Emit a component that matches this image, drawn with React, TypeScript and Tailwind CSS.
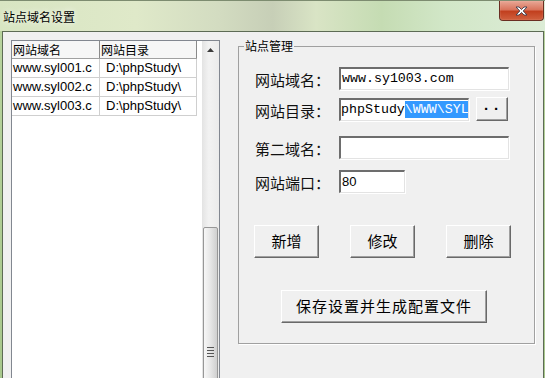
import React from 'react';

const rows = [
  ['www.syl001.c', 'D:\\phpStudy\\'],
  ['www.syl002.c', 'D:\\phpStudy\\'],
  ['www.syl003.c', 'D:\\phpStudy\\'],
];

const inputCls =
  'h-[23px] bg-white border-t-2 border-l-2 border-b border-r border-t-[#6d6d6d] border-l-[#6d6d6d] border-b-[#e3e3e3] border-r-[#e3e3e3] shadow-[1px_1px_0_#ffffff] flex items-center overflow-hidden whitespace-nowrap';

const btnCls =
  'bg-[#f0f0f0] border border-t-white border-l-white border-r-[#696969] border-b-[#696969] shadow-[inset_-1px_-1px_0_#a0a0a0] flex items-center justify-center text-[15px] text-black';

const Label = ({ text }: { text: string }) => (
  <div className="w-[85px] pl-[1px] mt-[3px] text-[15px] leading-[18px] text-[#111]">{text}</div>
);

const SiteList = () => (
  <div className="w-[209px] h-[360px] shrink-0 border border-[#828790] bg-white flex">
    <div className="w-[185px]">
      <div className="flex h-[18px] bg-[#f6f6f6] border-b border-[#a0a0a0] text-[12px] leading-[17px]">
        <div className="w-[88px] pl-[1px] border-r border-[#8a8a8a]">网站域名</div>
        <div className="w-[97px] pl-[1px] border-r border-[#8a8a8a]">网站目录</div>
      </div>
      {rows.map(([d, p]) => (
        <div key={d} className="flex h-[19px] border-b border-[#cfcfcf] text-[13px] leading-[18px] font-['Liberation_Sans',sans-serif] text-black">
          <div className="w-[88px] pl-[1px] border-r border-[#cfcfcf] overflow-hidden whitespace-nowrap">{d}</div>
          <div className="w-[97px] pl-[6px] border-r border-[#cfcfcf] overflow-hidden whitespace-nowrap">{p}</div>
        </div>
      ))}
    </div>
    <div className="w-[5px]" />
    {/* scrollbar */}
    <div className="w-[17px] bg-[linear-gradient(90deg,#e3e3e3,#f2f2f2_40%,#ebebeb)] flex flex-col overflow-hidden">
      <div className="h-[17px] shrink-0 flex items-center justify-center">
        <svg width="7" height="4" viewBox="0 0 7 4">
          <path d="M3.5 0 L7 4 L0 4 Z" fill="#3c3c3c" />
        </svg>
      </div>
      <div className="h-[169px] shrink-0" />
      <div className="h-[200px] shrink-0 w-[15px] ml-px rounded-[2px] border border-[#979797] bg-[linear-gradient(90deg,#f7f7f7,#e8e8e8_45%,#cfcfcf)] flex flex-col items-center pt-[119px]">
        <div className="flex flex-col gap-[1px]">
          <div className="w-[7px] h-[2px] border-t border-[#555]" />
          <div className="w-[7px] h-[2px] border-t border-[#555]" />
          <div className="w-[7px] h-[2px] border-t border-[#555]" />
          <div className="w-[7px] h-[2px] border-t border-[#555]" />
        </div>
      </div>
    </div>
  </div>
);

export default function App() {
  return (
    <div className="w-[545px] h-[378px] overflow-hidden flex flex-col bg-[linear-gradient(180deg,#b9d49f,#a8c88c)] font-['Noto_Sans_CJK_SC',sans-serif]">
      {/* title bar */}
      <div className="h-[31px] shrink-0 flex items-start justify-between bg-[linear-gradient(90deg,#d8e5c2_0%,#dfe9c9_25%,#d3dcc1_40%,#c7cfb7_50%,#d9e4c5_58%,#c5dcb3_70%,#d2e7c8_82%,#dcecd6_100%)] border-t border-[#7d8c70]">
        <div className="pl-[3px] pt-[9px] text-[12px] leading-[14px] text-black [text-shadow:0_0_6px_#ffffff]">站点域名设置</div>
        <div className="mr-[1px] w-[45px] h-[20px] rounded-b-[4px] border border-t-0 border-[#6a2e22] bg-[linear-gradient(180deg,#e8a796_0%,#d9755d_45%,#c2401f_55%,#d0603e_100%)] flex items-center justify-center shadow-[inset_0_0_1px_#f8d0c4]">
          <svg width="13" height="10" viewBox="0 0 13 10">
            <path d="M1 1 L4 1 L6.5 3.5 L9 1 L12 1 L8.2 5 L12 9 L9 9 L6.5 6.5 L4 9 L1 9 L4.8 5 Z" fill="#ffffff" stroke="#3d3d4d" strokeWidth="0.9" strokeLinejoin="round" />
          </svg>
        </div>
      </div>

      {/* client */}
      <div className="flex-1 ml-[2px] mr-[1px] border-l border-t border-r border-[#5d6b55] bg-[#f0f0f0] flex items-start pl-[8px] pt-[8px]">
        <SiteList />

        <fieldset className="ml-[18px] -mt-px w-[297px] h-[305px] shrink-0 border border-[#a0a0a0] shadow-[1px_1px_0_#ffffff] p-0 m-0">
          <legend className="ml-[5px] px-[1px] text-[12px] leading-[14px] text-black">站点管理</legend>
          <div className="pl-[15px] flex flex-col">
            <div className="mt-[14px] flex items-center">
              <Label text="网站域名：" />
              <div className={`${inputCls} w-[170px] pl-[1px] font-['Liberation_Mono',monospace] text-[13.3px] text-black`}>www.sy1003.com</div>
            </div>
            <div className="mt-[7px] flex items-center">
              <Label text="网站目录：" />
              <div className={`${inputCls} w-[130px] font-['Liberation_Mono',monospace] text-[13.3px] text-black`}>
                <span>phpStudy</span>
                <span className="bg-[#3399ff] text-white leading-[17px]">\WWW\SYL</span>
                <span className="w-px h-[16px] bg-[#c0651c]" />
              </div>
              <div className={`${btnCls} ml-[7px] w-[32px] h-[24px] font-['Liberation_Sans',sans-serif] text-[14px] font-bold tracking-[5px] pl-[4px]`}>··</div>
            </div>
            <div className="mt-[15px] flex items-center">
              <Label text="第二域名：" />
              <div className={`${inputCls} w-[170px]`} />
            </div>
            <div className="mt-[11px] flex items-center">
              <Label text="网站端口：" />
              <div className={`${inputCls} w-[66px] pl-[1px] font-['Liberation_Sans',sans-serif] text-[13px] text-black`}>80</div>
            </div>

            <div className="mt-[32px] flex gap-[31px]">
              <div className={`${btnCls} w-[65px] h-[33px]`}>新增</div>
              <div className={`${btnCls} w-[65px] h-[33px]`}>修改</div>
              <div className={`${btnCls} w-[65px] h-[33px]`}>删除</div>
            </div>

            <div className="mt-[32px] ml-[27px]">
              <div className={`${btnCls} w-[206px] h-[33px] tracking-[1px]`}>保存设置并生成配置文件</div>
            </div>
          </div>
        </fieldset>
      </div>
    </div>
  );
}
